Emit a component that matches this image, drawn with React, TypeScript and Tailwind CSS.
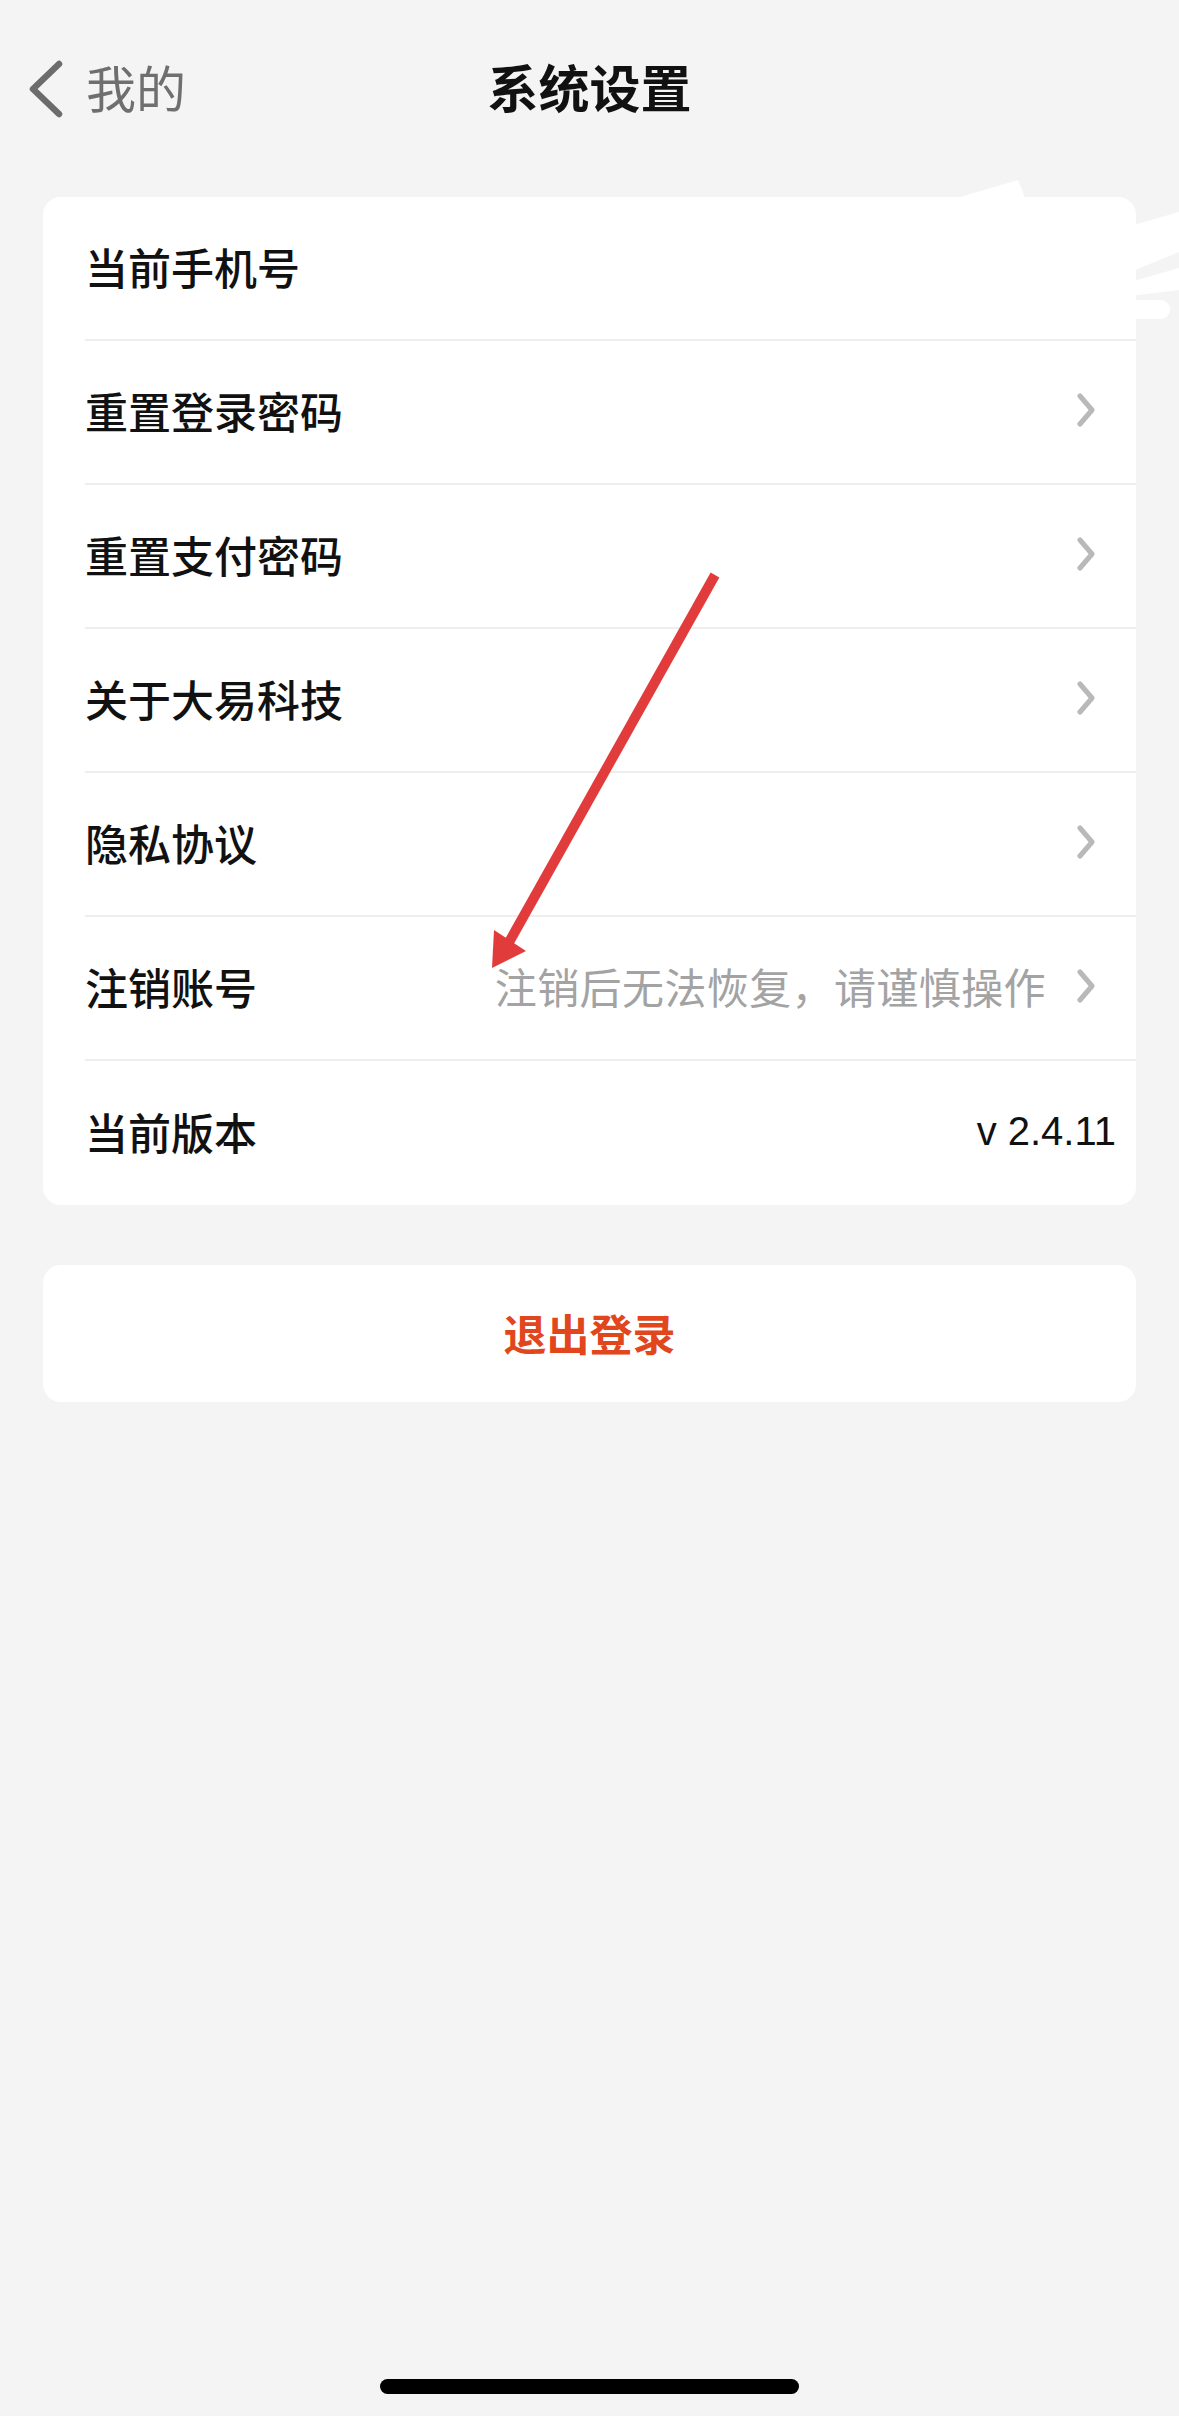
import React from "react";

const FONT = '"Noto Sans CJK SC", "Noto Sans", "Liberation Sans", sans-serif';

function Chevron() {
  return (
    <svg width="20" height="34" viewBox="0 0 20 34" fill="none">
      <polyline
        points="4,3 16,17 4,31"
        stroke="#b9b9b9"
        strokeWidth="5"
        strokeLinecap="round"
        strokeLinejoin="round"
      />
    </svg>
  );
}

function Row({
  label,
  hint,
  value,
  arrow = true,
  last = false,
}: {
  label: string;
  hint?: string;
  value?: string;
  arrow?: boolean;
  last?: boolean;
}) {
  return (
    <div className="ml-[42px] h-[144px]">
      <div
        className={
          "flex h-full items-center justify-between pb-[4px] " +
          (last ? "" : "border-b-2 border-[#eeeeee]")
        }
      >
        <span className="text-[43px] font-medium leading-none text-[#111111]">{label}</span>
        <div className={"flex items-center " + (arrow ? "pr-[40px]" : "pr-[20px]")}>
          {hint && (
            <span className="mr-[30px] text-[42px] leading-none tracking-[0.4px] text-[#a3a3a3]">
              {hint}
            </span>
          )}
          {value && (
            <span
              className="text-[40px] leading-none text-[#111111]"
              style={{ fontFamily: '"Liberation Sans", Arial, sans-serif' }}
            >
              {value}
            </span>
          )}
          {arrow && <Chevron />}
        </div>
      </div>
    </div>
  );
}

export default function App() {
  return (
    <div
      className="relative h-[2416px] w-[1179px] overflow-hidden bg-[#f4f4f4]"
      style={{ fontFamily: FONT }}
    >
      {/* Header */}
      <div className="mt-[37px] grid h-[98px] grid-cols-[1fr_auto_1fr] items-center">
        <div className="flex items-center pl-[26px]">
          <svg width="38" height="58" viewBox="0 0 38 58" fill="none" className="mt-[6px]">
            <polyline
              points="33,4 7,29 33,54"
              stroke="#6c6c6c"
              strokeWidth="6.5"
              strokeLinecap="round"
              strokeLinejoin="round"
            />
          </svg>
          <span className="ml-[22px] text-[50px] leading-none text-[#6f6f6f]">我的</span>
        </div>
        <div className="text-[51px] font-bold leading-none text-[#111111]">系统设置</div>
        <div />
      </div>

      {/* Settings card */}
      <div className="mx-[43px] mt-[62px] overflow-hidden rounded-[18px] bg-white">
        <Row label="当前手机号" arrow={false} />
        <Row label="重置登录密码" />
        <Row label="重置支付密码" />
        <Row label="关于大易科技" />
        <Row label="隐私协议" />
        <Row label="注销账号" hint="注销后无法恢复，请谨慎操作" />
        <Row label="当前版本" value="v 2.4.11" arrow={false} last />
      </div>

      {/* Logout */}
      <div className="mx-[43px] mt-[60px] flex h-[137px] items-center justify-center rounded-[18px] bg-white pb-[3px]">
        <span className="text-[43px] font-bold leading-none text-[#e2461c]">退出登录</span>
      </div>

      {/* Home indicator */}
      <div className="absolute bottom-[22px] left-[380px] h-[15px] w-[419px] rounded-full bg-black" />

      {/* Redaction smudge overlay */}
      <svg
        className="pointer-events-none absolute left-0 top-0"
        width="1179"
        height="400"
        viewBox="0 0 1179 400"
      >
        <polygon points="950,200 1018,180 1026,200" fill="#ffffff" />
        <polygon points="1130,226 1179,212 1179,252 1130,272" fill="#ffffff" />
        <polygon points="1130,282 1179,268 1179,290 1130,296" fill="#ffffff" />
        <rect x="1120" y="300" width="50" height="19" rx="9" fill="#ffffff" />
      </svg>

      {/* Red annotation arrow */}
      <svg
        className="pointer-events-none absolute left-0 top-0"
        width="1179"
        height="1100"
        viewBox="0 0 1179 1100"
      >
        <line x1="715" y1="575" x2="508" y2="944" stroke="#e23b3b" strokeWidth="10" />
        <polygon points="492,968 494,930 526,951" fill="#e23b3b" />
      </svg>
    </div>
  );
}
